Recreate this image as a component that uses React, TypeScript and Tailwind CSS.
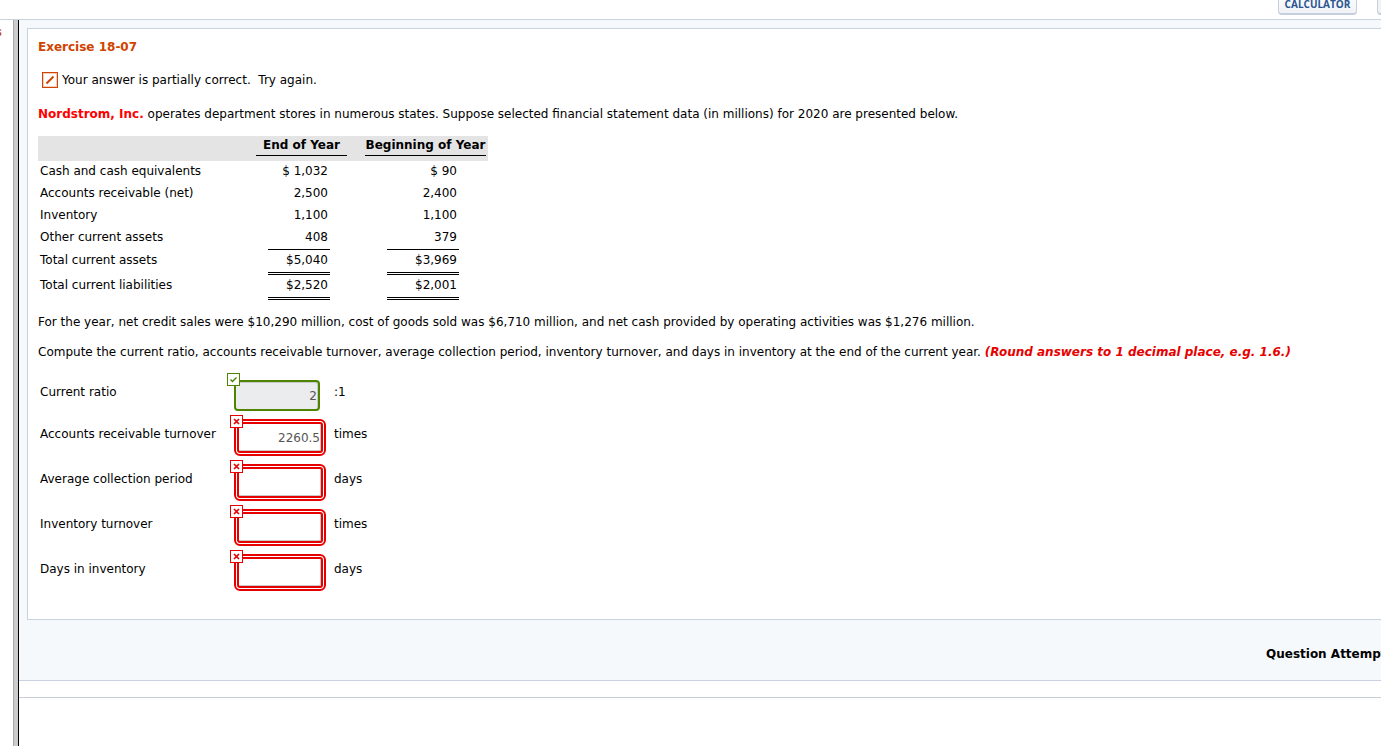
import clsx from 'clsx'

type Row = { label: string; end: string; beginning: string; line?: 'single' | 'double' }

const rows: Row[] = [
  { label: 'Cash and cash equivalents', end: '$ 1,032', beginning: '$ 90' },
  { label: 'Accounts receivable (net)', end: '2,500', beginning: '2,400' },
  { label: 'Inventory', end: '1,100', beginning: '1,100' },
  { label: 'Other current assets', end: '408', beginning: '379', line: 'single' },
  { label: 'Total current assets', end: '$5,040', beginning: '$3,969', line: 'double' },
  { label: 'Total current liabilities', end: '$2,520', beginning: '$2,001', line: 'double' },
]

const wrongAnswers = [
  { id: 'receivable-turnover', label: 'Accounts receivable turnover', value: '2260.5', unit: 'times' },
  { id: 'collection-period', label: 'Average collection period', value: '', unit: 'days' },
  { id: 'inventory-turnover', label: 'Inventory turnover', value: '', unit: 'times' },
  { id: 'days-in-inventory', label: 'Days in inventory', value: '', unit: 'days' },
]

function Amount({ value, line }: { value: string; line?: Row['line'] }) {
  return (
    <div
      className={clsx(
        'pr-0.5 text-right',
        !line && 'h-[22px]',
        line === 'single' && 'h-[23px] border-b border-black',
        line === 'double' && 'h-[25px] border-b-[3px] border-double border-black',
      )}
    >
      {value}
    </div>
  )
}

function StatementTable() {
  return (
    <table className="mt-3 border-separate border-spacing-0 leading-5">
      <thead>
        <tr className="h-[25px] bg-[#e4e4e4] align-top leading-[19px]">
          <td className="w-[218px]" />
          <th className="w-[91px] p-0">
            <div className="border-b border-black">End of Year</div>
          </th>
          <td className="w-[18px]" />
          <th className="w-[123px] p-0 pr-0.5">
            <div className="flex justify-center whitespace-nowrap border-b border-black">Beginning of Year</div>
          </th>
        </tr>
      </thead>
      <tbody>
        {rows.map((row) => (
          <tr key={row.label} className="align-top">
            <th scope="row" className="p-0 pl-0.5 text-left font-normal">{row.label}</th>
            <td className="p-0 pr-[17px] pl-3">
              <Amount value={row.end} line={row.line} />
            </td>
            <td />
            <td className="p-0 pr-[29px] pl-[22px]">
              <Amount value={row.beginning} line={row.line} />
            </td>
          </tr>
        ))}
      </tbody>
    </table>
  )
}

function CheckBadge() {
  return (
    <svg className="absolute -top-[7px] -left-[7px] h-[13px] w-[13px]" viewBox="0 0 13 13" fill="none">
      <rect x="0.5" y="0.5" width="12" height="12" fill="#fff" stroke="#4f8400" />
      <path d="M3.5 6.5l2 2 4-4" stroke="#4f8400" strokeWidth="1.4" />
    </svg>
  )
}

function CrossBadge() {
  return (
    <svg className="absolute -top-1.5 -left-1.5 h-[13px] w-[13px]" viewBox="0 0 13 13" fill="none">
      <rect x="0.5" y="0.5" width="12" height="12" fill="#fff" stroke="#e60000" />
      <path d="M4 4l5 5M9 4l-5 5" stroke="#e60000" strokeWidth="1.7" />
    </svg>
  )
}

function Answers() {
  return (
    <div className="mt-[18px] pl-0.5">
      <div className="flex h-[39px] items-start">
        <label htmlFor="current-ratio" className="w-[194px] pt-0.5 leading-5">Current ratio</label>
        <div className="relative w-[86px]">
          <input
            id="current-ratio"
            defaultValue="2"
            className="block h-[31px] w-full rounded-[4px] border-2 border-[#4f8400] bg-[#ebecee] pr-px text-right text-[#555] shadow-[inset_-1px_1px_0_#c9c9d0] outline-none"
          />
          <CheckBadge />
        </div>
        <span className="pt-0.5 pl-3.5 leading-5">:1</span>
      </div>
      {wrongAnswers.map((answer) => (
        <div key={answer.id} className="flex h-[45px] items-start">
          <label htmlFor={answer.id} className="w-[194px] pt-[5px] leading-5">{answer.label}</label>
          <div className="relative w-[92px] rounded-[6px] border-2 border-[#e60000] bg-white p-px">
            <input
              id={answer.id}
              defaultValue={answer.value}
              className="block h-[31px] w-full rounded-[3px] border-2 border-[#e60000] pr-px text-right text-[#555] shadow-[inset_-1px_-1px_0_#c9c9c9] outline-none"
            />
            <CrossBadge />
          </div>
          <span className="pt-[5px] pl-2 leading-5">{answer.unit}</span>
        </div>
      ))}
    </div>
  )
}

export default function App() {
  return (
    <div className="flex min-h-screen flex-col overflow-hidden bg-white font-['DejaVu_Sans',Verdana,sans-serif] text-[12px] text-black">
      <header className="flex h-5 items-end justify-end overflow-hidden border-b border-[#ccd2e0] pb-1">
        <button className="mr-5 h-6 w-[79px] shrink-0 rounded-[4px] border border-b-2 border-[#c5cedd] bg-gradient-to-b from-white to-[#f0f2f5] pt-0.5 font-['Open_Sans',sans-serif] text-[10px] leading-4 font-bold text-[#2a5490]">
          CALCULATOR
        </button>
        <button aria-label="More tools" className="-mr-4 h-6 w-5 shrink-0 rounded-[4px] border border-b-2 border-[#c5cedd] bg-[#f0f2f5]" />
      </header>

      <div className="flex grow">
        <aside className="w-[13px] shrink-0">
          <div className="mt-0.5 flex w-0.5 justify-end overflow-hidden leading-5 font-bold text-[#d04300]">s</div>
        </aside>
        <div className="w-1.5 shrink-0 border-r border-l border-r-black border-l-[#a9a9a9] bg-[#ccc]" />

        <main className="min-w-0 grow">
          <div className="border-b border-[#c9d2e0] bg-[#f5f9fc] pt-2 pl-2">
            <section className="border border-r-0 border-[#c9d2e0] bg-white pt-2 pb-5 pl-2.5">
              <h1 className="leading-5 font-bold text-[#d04300]">Exercise 18-07</h1>
              <div className="mt-[13px] flex items-center gap-1 pl-1 leading-5">
                <svg className="h-4 w-4 shrink-0" viewBox="0 0 16 16" fill="none">
                  <rect x="0.5" y="0.5" width="15" height="15" fill="#fff" stroke="#d04300" />
                  <rect x="1.5" y="1.5" width="13" height="13" stroke="#f3cfc0" />
                  <path d="M4.5 11.5l7-7" stroke="#d04300" strokeWidth="2" />
                </svg>
                <span className="whitespace-pre">Your answer is partially correct.  Try again.</span>
              </div>
              <p className="mt-3.5 leading-5">
                <b className="text-[#f00]">Nordstrom, Inc.</b> operates department stores in numerous states. Suppose selected financial statement data (in millions) for 2020 are presented below.
              </p>
              <StatementTable />
              <p className="mt-3 leading-5">
                For the year, net credit sales were $10,290 million, cost of goods sold was $6,710 million, and net cash provided by operating activities was $1,276 million.
              </p>
              <p className="mt-2.5 leading-5">
                Compute the current ratio, accounts receivable turnover, average collection period, inventory turnover, and days in inventory at the end of the current year.{' '}
                <b className="text-[#e60000] italic">(Round answers to 1 decimal place, e.g. 1.6.)</b>
              </p>
              <Answers />
            </section>
            <div className="flex h-[60px] justify-end overflow-hidden pt-6">
              <div className="w-[115px] leading-5 font-bold whitespace-nowrap">Question Attempts</div>
            </div>
          </div>
          <div className="h-[17px] border-b border-[#c9ced6]" />
        </main>
      </div>
    </div>
  )
}
